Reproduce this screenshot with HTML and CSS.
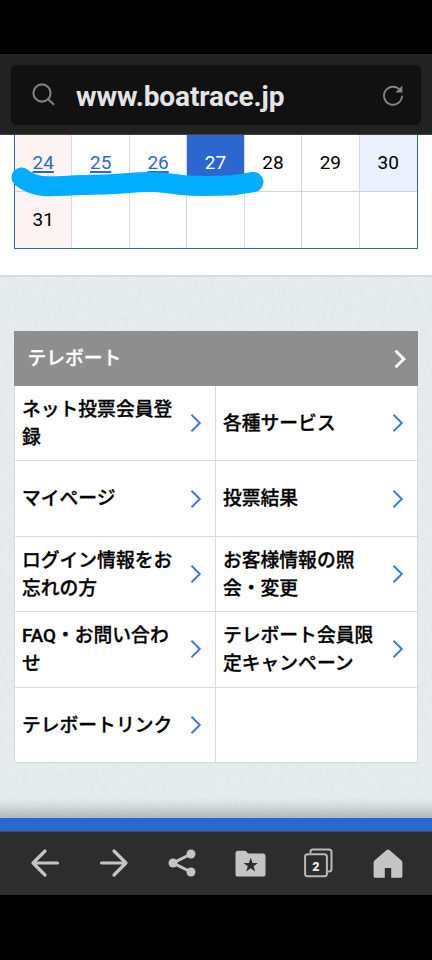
FILE: index.html
```
<!DOCTYPE html>
<html lang="ja">
<head>
<meta charset="utf-8">
<title>www.boatrace.jp</title>
<link rel="stylesheet" href="styles.css">
</head>
<body>
<svg class="defs" width="0" height="0">
  <symbol id="chevron" viewBox="0 0 12 20"><path d="M1.5 1.8 9.8 10 1.5 18.2" fill="none" stroke="currentColor"/></symbol>
</svg>
<header class="browser-bar">
  <div class="address">
    <svg class="search" viewBox="0 0 24 24"><circle cx="10" cy="10" r="8.600"/><path d="m16.200 16.200 5.800 5.600"/></svg>
    <span class="url">www.boatrace.jp</span>
    <svg class="reload" viewBox="0 0 22 22"><path class="arc" d="M18.1 6.2A9 9 0 1 0 20 11.8"/><path class="tip" d="M20.4 1.4v7h-7z"/></svg>
  </div>
</header>
<main class="page">
  <section class="calendar-area">
    <div class="calendar">
      <div class="day sunday"><a>24</a></div><div class="day"><a>25</a></div><div class="day"><a>26</a></div><div class="day today">27</div><div class="day">28</div><div class="day">29</div><div class="day saturday">30</div>
      <div class="day sunday">31</div><div class="day"></div><div class="day"></div><div class="day"></div><div class="day"></div><div class="day"></div><div class="day"></div>
    </div>
    <svg class="marker" viewBox="0 0 432 141"><path d="M21.500 42.500C36 54 51 51.500 71 50.500S110 50 129 48S158 47 178 49.500S218 51 231 50.500L253.500 47"/></svg>
  </section>
  <section class="menu-area">
    <svg class="texture" width="432" height="541"><filter id="grain"><feTurbulence type="fractalNoise" baseFrequency="0.25" numOctaves="2" seed="4"/><feColorMatrix values="0 0 0 0 .64  0 0 0 0 .70  0 0 0 0 .73  .45 0 0 0 -.18"/></filter><rect width="432" height="541" filter="url(#grain)"/></svg>
    <nav class="menu">
      <h2 class="menu-title"><span>テレボート</span><svg class="chevron"><use href="#chevron"/></svg></h2>
      <div class="links">
        <a class="link"><span>ネット投票会員登<br>録</span><svg class="chevron"><use href="#chevron"/></svg></a>
        <a class="link"><span>各種サービス</span><svg class="chevron"><use href="#chevron"/></svg></a>
        <a class="link"><span>マイページ</span><svg class="chevron"><use href="#chevron"/></svg></a>
        <a class="link"><span>投票結果</span><svg class="chevron"><use href="#chevron"/></svg></a>
        <a class="link"><span>ログイン情報をお<br>忘れの方</span><svg class="chevron"><use href="#chevron"/></svg></a>
        <a class="link"><span>お客様情報の照<br>会・変更</span><svg class="chevron"><use href="#chevron"/></svg></a>
        <a class="link"><span>FAQ・お問い合わ<br>せ</span><svg class="chevron"><use href="#chevron"/></svg></a>
        <a class="link"><span>テレボート会員限<br>定キャンペーン</span><svg class="chevron"><use href="#chevron"/></svg></a>
        <a class="link"><span>テレボートリンク</span><svg class="chevron"><use href="#chevron"/></svg></a>
        <div class="link"></div>
      </div>
    </nav>
  </section>
</main>
<div class="accent"></div>
<footer class="toolbar">
  <svg viewBox="0 0 32 32"><path class="line" d="M28.500 16H4M16 4 4 16l12 12"/></svg>
  <svg viewBox="0 0 32 32"><path class="line" d="M3.500 16H28M16 4l12 12-12 12"/></svg>
  <svg viewBox="0 0 32 32"><path class="share-line" d="M25 7 7 16l18 9"/><circle cx="25" cy="7" r="4.500"/><circle cx="7" cy="16" r="4.500"/><circle cx="25" cy="25" r="4.500"/></svg>
  <svg viewBox="0 0 32 32"><path d="M3 3.800h6.500q1.300 0 2.200 1.200l1.300 1.400h15q2.500 0 2.500 2.500v18q0 2.700-2.500 2.700H3Q.5 29.600.5 27V6.300Q.5 3.800 3 3.800z"/><path class="star" d="m15.700 10.800 1.800 5.100h5.400l-4.300 3.300 1.600 5.200-4.500-3.200-4.500 3.200 1.600-5.200-4.300-3.300h5.400z"/></svg>
  <svg viewBox="0 0 32 32"><path class="tab-line" d="M7.500 6V4.800Q7.500 2.600 9.800 2.600H26q2.500 0 2.500 2.500v17q0 2.500-2.500 2.500h-2"/><rect class="tab-line" x="2.100" y="7.200" width="21.800" height="22" rx="2.500"/><text x="12.900" y="23.600">2</text></svg>
  <svg viewBox="0 0 32 32"><path d="M14.600 3q1.400-1.200 2.800 0l11.800 10.300q1.200 1 1.200 2.300v13.600q0 1.500-1.500 1.500h-9.700V21h-6.400v9.700H3.100q-1.500 0-1.500-1.500V15.600q0-1.300 1.200-2.300z"/></svg>
</footer>
</body>
</html>
```

FILE: styles.css
```
* { box-sizing: border-box; }
body {
  margin: 0;
  height: 960px;
  padding: 54px 0 65px;
  display: flex;
  flex-direction: column;
  overflow: hidden;
  background: #000;
  color: #000;
  font-family: Roboto, "Noto Sans CJK JP", sans-serif;
}
.defs { position: absolute; }
.browser-bar { height: 81px; flex: none; padding: 11px; background: #222; border-bottom: 1px solid #444; }
.address { height: 60px; border-radius: 5px; background: #111; display: flex; align-items: center; padding: 0 17px 0 20.500px; }
.search { width: 24px; height: 24px; fill: none; stroke: #808080; stroke-width: 2.100; }
.url { flex: 1; margin: 4px 0 0 20.500px; font-size: 28px; line-height: 34px; font-weight: 700; letter-spacing: -.1px; color: #e4e4e4; }
.reload { width: 22px; height: 22px; margin-top: -1px; }
.arc { fill: none; stroke: #858585; stroke-width: 1.8; }
.tip { fill: #858585; }
.page { height: 683px; flex: none; overflow: hidden; }
.calendar-area { position: relative; height: 142px; padding: 0 14px; background: #fff; border-bottom: 2px solid #d7dddf; }
.calendar { height: 114px; display: grid; grid-template-columns: repeat(7, 1fr); grid-template-rows: 57px 56px; border: 1.500px solid #3b62ac; border-top: 0; }
.day { display: flex; align-items: center; justify-content: center; padding-bottom: 1px; font-size: 19px; border-right: 1px solid #d9d9d9; border-bottom: 1px solid #d4d4d4; }
.day:nth-child(7n) { border-right: 0; }
.day:nth-child(n+8) { border-bottom: 0; padding-bottom: 2px; }
.day a { color: #2d67d1; text-decoration: underline; text-decoration-thickness: 1.500px; text-underline-offset: 2px; }
.sunday { background: #fdf3f2; }
.saturday { background: #eaf0fe; }
.today { background: #2b67cf; color: #fff; }
.marker { position: absolute; left: 0; top: 0; width: 432px; height: 141px; fill: none; stroke: #00adfe; stroke-width: 20; stroke-linecap: round; stroke-linejoin: round; }
.menu-area { position: relative; height: 541px; padding: 54px 14px 0; background: #e6ebee; }
.menu-area::after { content: ""; position: absolute; left: 0; right: 0; bottom: 0; height: 20px; background: linear-gradient(transparent, rgba(70, 75, 75, .1) 40%, rgba(70, 75, 75, .32)); }
.texture { position: absolute; left: 0; top: 0; }
.menu { position: relative; }
.menu-title { margin: 0; height: 55px; padding: 0 12.500px 0 13.500px; display: flex; align-items: center; justify-content: space-between; background: #8e8e8e; color: #fff; font-size: 18.800px; font-weight: 500; -webkit-text-stroke: .3px; }
.menu-title span { margin-top: -4px; }
.links { display: grid; grid-template-columns: 201px 202px; grid-template-rows: repeat(5, 75.400px); border-left: 1px solid #d9dbdc; background: #fff; }
.link { display: flex; align-items: center; justify-content: space-between; padding: 0 13px 0 7px; border-right: 1px solid #d9dbdc; border-bottom: 1px solid #d6d8d9; font-size: 18.800px; line-height: 28.200px; font-weight: 500; -webkit-text-stroke: .3px; white-space: nowrap; }
.link span { margin-top: 2px; }
.chevron { flex: none; width: 12px; height: 20px; color: #3878db; stroke-width: 1.9; }
.menu-title .chevron { color: #fff; stroke-width: 3; }
.accent { height: 13px; flex: none; background: #2b67cf; }
.toolbar { height: 64px; flex: none; padding: 0 28px 2px 29px; display: flex; align-items: center; justify-content: space-between; background: #2d2d2d; border-top: 1px solid #494949; }
.toolbar svg { width: 32px; height: 32px; fill: #c4c4c4; }
.toolbar .line { fill: none; stroke: #c4c4c4; stroke-width: 3.200; stroke-linecap: round; stroke-linejoin: round; }
.toolbar .share-line { fill: none; stroke: #c4c4c4; stroke-width: 3; }
.toolbar .star { fill: #2d2d2d; }
.toolbar .tab-line { fill: none; stroke: #b9b9b9; stroke-width: 2; }
.toolbar text { font-size: 12.500px; font-weight: 900; text-anchor: middle; fill: #eee; }
```
